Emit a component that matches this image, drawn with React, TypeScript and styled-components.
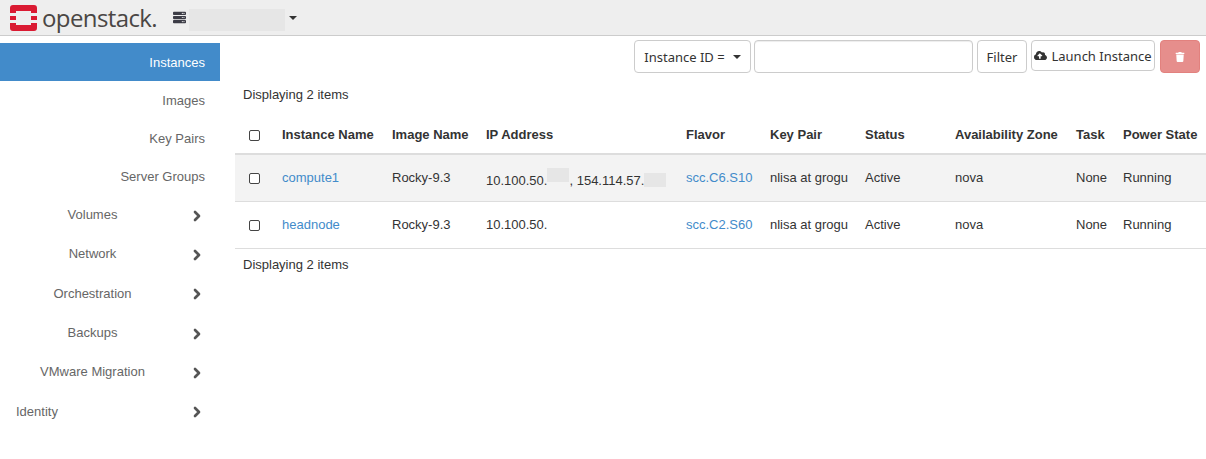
import React from "react";
import styled, { createGlobalStyle } from "styled-components";
import { ChevronRight } from "lucide-react";
import { FaCloudUploadAlt, FaTrash, FaUnlock, FaServer } from "react-icons/fa";

const GlobalStyle = createGlobalStyle`
  html, body {
    margin: 0;
    background: #fff;
    font-family: "Liberation Sans", Arial, sans-serif;
    font-size: 13px;
    color: #333;
  }
`;

const Page = styled.div`
  width: 1206px;
  height: 459px;
  overflow: hidden;
`;

const Navbar = styled.header`
  height: 35px;
  background: #eee;
  border-bottom: 1px solid #ccc;
  display: flex;
  align-items: center;
  padding-left: 10px;
`;

const LogoText = styled.span`
  font-family: "Open Sans", sans-serif;
  font-size: 24px;
  letter-spacing: -0.6px;
  color: #4a4644;
  margin-left: 5px;
  width: 131px;
`;

const ProjectIcon = styled.span`
  color: #3c3c46;
  display: flex;
  margin-right: 3px;
`;

const ProjectMask = styled.span`
  width: 96px;
  height: 22px;
  background: #e6e6e6;
  margin-top: 5px;
`;

const Caret = styled.span`
  width: 0;
  height: 0;
  border-left: 4px solid transparent;
  border-right: 4px solid transparent;
  border-top: 4px solid #333;
  margin-left: 4px;
`;

const Body = styled.div`
  display: flex;
`;

const Sidebar = styled.nav`
  width: 220px;
  padding-top: 7px;
  flex: none;
`;

const SideItem = styled.div<{ $active?: boolean; $height?: number }>`
  height: ${p => p.$height ?? 38}px;
  display: flex;
  align-items: center;
  justify-content: flex-end;
  padding-right: 15px;
  color: ${p => (p.$active ? "#fff" : "#666")};
  background: ${p => (p.$active ? "#428bca" : "transparent")};
`;

const SideGroup = styled.div<{ $left?: boolean }>`
  height: 39.3px;
  display: grid;
  grid-template-columns: 1fr 20px;
  align-items: center;
  padding-right: 15px;
  color: #666;
  text-align: ${p => (p.$left ? "left" : "center")};
  padding-left: ${p => (p.$left ? "16px" : "0")};
`;

const Chevron = styled(ChevronRight)`
  color: #555;
  margin-top: 2px;
  justify-self: end;
`;

const Main = styled.main`
  margin-left: 15px;
  width: 971px;
  flex: none;
`;

const Toolbar = styled.div`
  height: 33px;
  padding-top: 4px;
  display: flex;
  justify-content: flex-start;
  padding-left: 399px;
`;

const Button = styled.button<{ $width: number; $danger?: boolean; $gap?: number }>`
  width: ${p => p.$width}px;
  height: 33px;
  margin-right: ${p => p.$gap ?? 0}px;
  flex: none;
  box-sizing: border-box;
  border: 1px solid ${p => (p.$danger ? "#d43f3a" : "#ccc")};
  border-radius: 4px;
  background: ${p => (p.$danger ? "#d9534f" : "#fff")};
  opacity: ${p => (p.$danger ? 0.65 : 1)};
  color: ${p => (p.$danger ? "#fff" : "#333")};
  font-family: "Noto Sans", sans-serif;
  font-size: 13px;
  padding: 0;
  display: flex;
  align-items: center;
  justify-content: center;
  gap: 4px;
`;

const LaunchButton = styled(Button)`
  height: 31px;
  padding: 0;
`;

const SearchInput = styled.input`
  width: 219px;
  height: 33px;
  box-sizing: border-box;
  border: 1px solid #ccc;
  border-radius: 4px;
  margin-right: 4px;
  flex: none;
  box-shadow: inset 0 1px 1px rgba(0, 0, 0, 0.075);
`;

const Displaying = styled.div<{ $top: number; $height: number }>`
  padding: ${p => p.$top}px 0 0 8px;
  height: ${p => p.$height}px;
  box-sizing: border-box;
`;

const Table = styled.table`
  border-collapse: collapse;
  table-layout: fixed;
  width: 971px;
`;

const Head = styled.th<{ $width: number }>`
  width: ${p => p.$width}px;
  height: 38px;
  padding: 0 0 0 8px;
  box-sizing: border-box;
  text-align: left;
  font-weight: 700;
  border-bottom: 2px solid #ddd;
`;

const Row = styled.tr<{ $striped?: boolean }>`
  background: ${p => (p.$striped ? "#f3f3f3" : "#fff")};
`;

const Cell = styled.td`
  height: 47px;
  padding: 0 0 0 8px;
  box-sizing: border-box;
  border-bottom: 1px solid #ddd;
  white-space: nowrap;
`;

const Check = styled.span`
  display: block;
  width: 9px;
  height: 9px;
  margin: 2px 0 0 6px;
  border: 1px solid #444;
  border-radius: 2px;
  background: #fff;
`;

const NameLink = styled.a`
  color: #428bca;
`;

const Mask = styled.span<{ $up?: boolean }>`
  display: inline-block;
  width: 22px;
  height: 14px;
  background: #e6e6e6;
  vertical-align: ${p => (p.$up ? "3px" : "-2px")};
`;

const LockIcon = styled(FaUnlock)`
  display: block;
  color: #c0c0c0;
  margin-left: 8px;
`;

function OpenStackLogo() {
  return (
    <svg width="27" height="26" viewBox="0 0 27 26">
      <path
        fill="#da1a32"
        fillRule="evenodd"
        d="M3 0h21a3 3 0 0 1 3 3v5h-6V6H6v2H0V3a3 3 0 0 1 3-3zM0 11h6v4H0zM21 11h6v4h-6zM0 18h6v2h15v-2h6v5a3 3 0 0 1-3 3H3a3 3 0 0 1-3-3z"
      />
    </svg>
  );
}

const heads: [string, number][] = [
  ["", 39],
  ["Instance Name", 110],
  ["Image Name", 94],
  ["IP Address", 200],
  ["Flavor", 84],
  ["Key Pair", 95],
  ["Status", 90],
  ["Availability Zone", 121],
  ["Task", 47],
  ["Power State", 91],
];

const rows = [
  { name: "compute1", flavor: "scc.C6.S10", masked: true },
  { name: "headnode", flavor: "scc.C2.S60", masked: false },
];

export default function App() {
  return (
    <Page>
      <GlobalStyle />
      <Navbar>
        <OpenStackLogo />
        <LogoText>openstack.</LogoText>
        <ProjectIcon>
          <FaServer size={13} />
        </ProjectIcon>
        <ProjectMask />
        <Caret />
      </Navbar>
      <Body>
        <Sidebar>
          <SideItem $active>Instances</SideItem>
          <SideItem>Images</SideItem>
          <SideItem>Key Pairs</SideItem>
          <SideItem>Server Groups</SideItem>
          {["Volumes", "Network", "Orchestration", "Backups", "VMware Migration"].map(label => (
            <SideGroup key={label}>
              <span>{label}</span>
              <Chevron size={16} strokeWidth={4} />
            </SideGroup>
          ))}
          <SideGroup $left>
            <span>Identity</span>
            <Chevron size={16} strokeWidth={4} />
          </SideGroup>
        </Sidebar>
        <Main>
          <Toolbar>
            <Button $width={117} $gap={3}>
              Instance ID = <Caret />
            </Button>
            <SearchInput />
            <Button $width={50} $gap={4}>Filter</Button>
            <LaunchButton $width={124} $gap={5}>
              <FaCloudUploadAlt size={13} /> Launch Instance
            </LaunchButton>
            <Button $width={40} $danger>
              <FaTrash size={10} />
            </Button>
          </Toolbar>
          <Displaying $top={14} $height={43}>Displaying 2 items</Displaying>
          <Table>
            <thead>
              <tr>
                {heads.map(([label, width], i) => (
                  <Head key={i} $width={width}>
                    {i === 0 ? <Check /> : label}
                  </Head>
                ))}
              </tr>
            </thead>
            <tbody>
              {rows.map((row, i) => (
                <Row key={row.name} $striped={i === 0}>
                  <Cell><Check /></Cell>
                  <Cell><NameLink>{row.name}</NameLink></Cell>
                  <Cell>Rocky-9.3</Cell>
                  <Cell>
                    10.100.50.
                    {row.masked && (
                      <>
                        <Mask $up />, 154.114.57.<Mask />
                      </>
                    )}
                  </Cell>
                  <Cell><NameLink>{row.flavor}</NameLink></Cell>
                  <Cell>nlisa at grogu</Cell>
                  <Cell>Active</Cell>
                  <Cell>nova</Cell>
                  <Cell>None</Cell>
                  <Cell>Running</Cell>
                </Row>
              ))}
            </tbody>
          </Table>
          <Displaying $top={8} $height={30}>Displaying 2 items</Displaying>
        </Main>
      </Body>
    </Page>
  );
}
